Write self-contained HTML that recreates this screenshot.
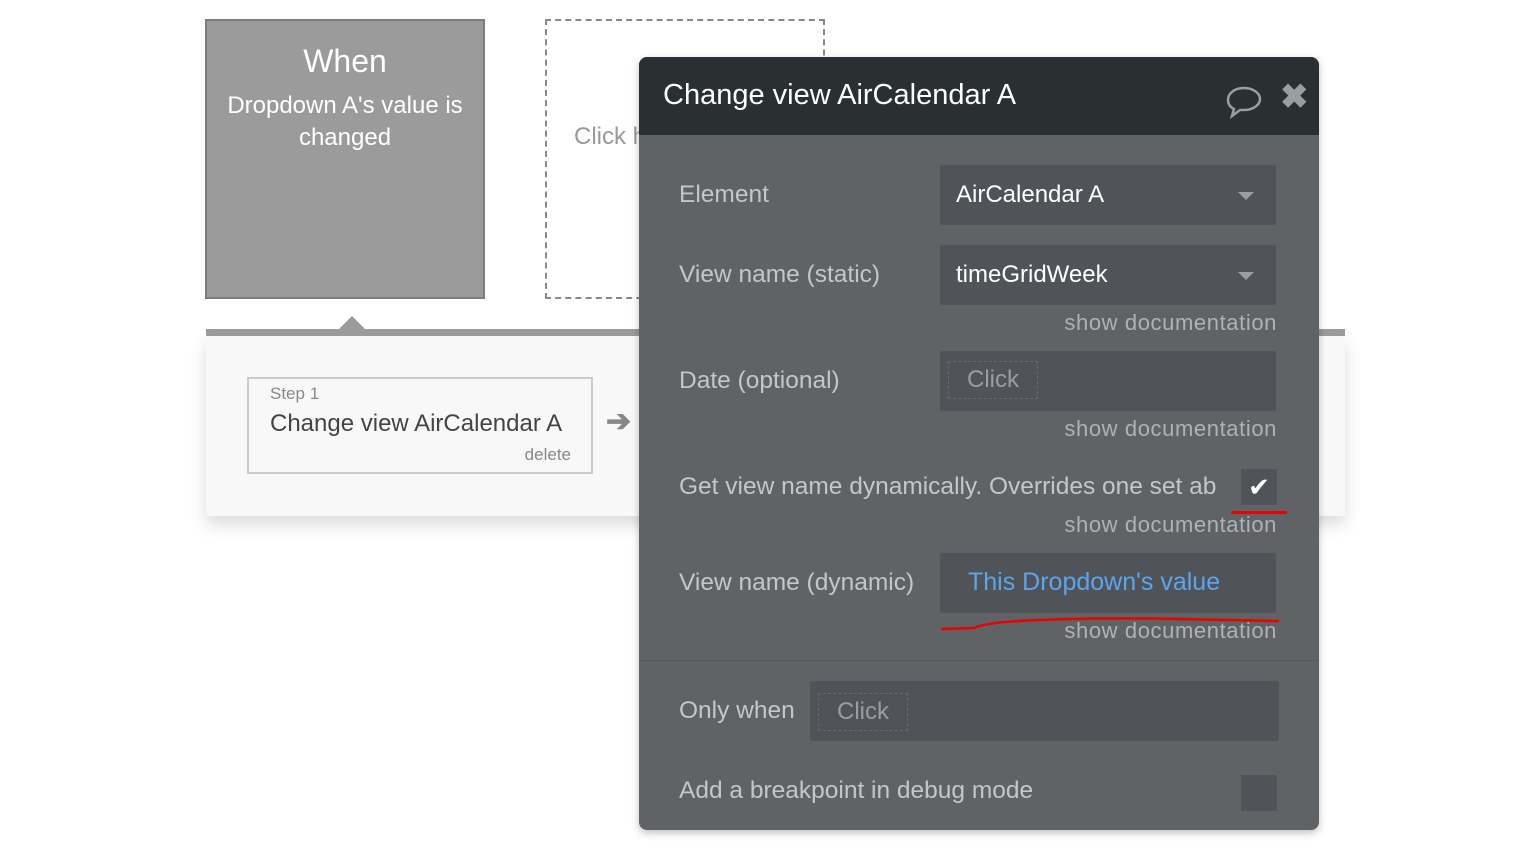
<!DOCTYPE html>
<html><head><meta charset="utf-8"><style>
*{margin:0;padding:0;box-sizing:border-box}
body{width:1530px;height:854px;background:#fff;position:relative;overflow:hidden;font-family:"Liberation Sans",sans-serif}
.a{position:absolute}
.lbl{position:absolute;left:40px;color:#c3c7ca;font-size:24.5px}
.inp{position:absolute;left:301px;width:336px;height:60px;background:#505458;border-radius:2px}
.doc{position:absolute;right:42px;color:#aeb2b5;font-size:22px;letter-spacing:0.6px}
.click{position:absolute;border:1px dashed #666b6f;color:#9a9ea1;font-size:24px;padding:4px 18px}
</style></head><body>
<div class="a" style="left:205px;top:19px;width:280px;height:280px;background:#9b9b9b;border:2px solid #7c7c7c;text-align:center;color:#fff">
<div style="font-size:32px;margin-top:22px">When</div>
<div style="font-size:24px;line-height:32px;margin-top:10px">Dropdown A's value is<br>changed</div>
</div>
<div class="a" style="left:545px;top:19px;width:280px;height:280px;border:2px dashed #888"></div>
<div class="a" style="left:574px;top:123px;font-size:24px;color:#999">Click h</div>
<div class="a" style="left:206px;top:336px;width:1139px;height:180px;background:#f8f8f8;box-shadow:0 8px 16px rgba(0,0,0,.15)"></div>
<div class="a" style="left:206px;top:329px;width:1139px;height:7px;background:#9b9b9b"></div>
<div class="a" style="left:338px;top:316px;width:0;height:0;border-left:14px solid transparent;border-right:14px solid transparent;border-bottom:14px solid #9b9b9b"></div>
<div class="a" style="left:247px;top:377px;width:346px;height:97px;border:2px solid #c6ccd0;background:#f8f8f8">
<div style="position:absolute;left:21px;top:5px;font-size:17px;color:#888">Step 1</div>
<div style="position:absolute;left:21px;top:31px;font-size:24px;color:#444;white-space:nowrap">Change view AirCalendar A</div>
<div style="position:absolute;right:20px;top:66px;font-size:17px;color:#888">delete</div>
</div>
<div class="a" style="left:606px;top:404px;font-size:30px;color:#888;font-weight:bold">➔</div>
<div class="a" style="left:639px;top:57px;width:680px;height:773px;background:#5f6366;border-radius:8px;box-shadow:0 3px 8px rgba(0,0,0,.25);overflow:hidden">
<div style="position:absolute;left:0;top:0;width:680px;height:78px;background:#2a2f31"></div>
<div style="position:absolute;left:24px;top:22px;font-size:29px;color:#fff">Change view AirCalendar A</div>
<svg style="position:absolute;left:586px;top:26px" width="38" height="38" viewBox="0 0 38 38"><path d="M19 5C10 5 3 10 3 17c0 4 2 7 6 9l-2 7 8-6c1 0 3 0 4 0 9 0 16-5 16-11S28 5 19 5z" fill="none" stroke="#9a9ea1" stroke-width="2.5"/></svg>
<div style="position:absolute;left:641px;top:20px;font-size:34px;color:#9a9ea1;font-weight:bold">✖</div>
<div class="lbl" style="top:124px">Element</div>
<div class="inp" style="top:108px"><span style="position:absolute;left:16px;top:16px;font-size:24px;color:#fff">AirCalendar A</span><span style="position:absolute;right:22px;top:27px;border-left:8px solid transparent;border-right:8px solid transparent;border-top:8px solid #9a9ea1"></span></div>
<div class="lbl" style="top:204px">View name (static)</div>
<div class="inp" style="top:188px"><span style="position:absolute;left:16px;top:16px;font-size:24px;color:#fff">timeGridWeek</span><span style="position:absolute;right:22px;top:27px;border-left:8px solid transparent;border-right:8px solid transparent;border-top:8px solid #9a9ea1"></span></div>
<div class="doc" style="top:253px">show documentation</div>
<div class="lbl" style="top:310px">Date (optional)</div>
<div class="inp" style="top:294px"><div class="click" style="left:8px;top:10px">Click</div></div>
<div class="doc" style="top:359px">show documentation</div>
<div class="lbl" style="top:416px">Get view name dynamically. Overrides one set ab</div>
<div style="position:absolute;left:602px;top:412px;width:36px;height:36px;background:#505458;color:#fff;font-size:26px;text-align:center;line-height:36px">✔</div>
<div style="position:absolute;left:592px;top:454px;width:56px;height:3px;background:#e00;border-radius:2px"></div>
<div class="doc" style="top:455px">show documentation</div>
<div class="lbl" style="top:512px">View name (dynamic)</div>
<div class="inp" style="top:496px"><span style="position:absolute;left:28px;top:15px;font-size:25px;color:#5aa6ee">This Dropdown's value</span></div>
<svg style="position:absolute;left:300px;top:558px" width="342" height="20"><path d="M2 14 L35 13 Q45 8 80 6 Q150 2 240 4 L340 6" fill="none" stroke="#e00" stroke-width="2.5"/></svg>
<div class="doc" style="top:561px">show documentation</div>
<div style="position:absolute;left:0;top:603px;width:680px;height:1px;background:#575b5e"></div>
<div class="lbl" style="top:640px">Only when</div>
<div class="inp" style="left:171px;width:469px;top:624px"><div class="click" style="left:8px;top:12px">Click</div></div>
<div class="lbl" style="top:720px">Add a breakpoint in debug mode</div>
<div style="position:absolute;left:602px;top:718px;width:36px;height:36px;background:#505458"></div>
</div>
</body></html>
